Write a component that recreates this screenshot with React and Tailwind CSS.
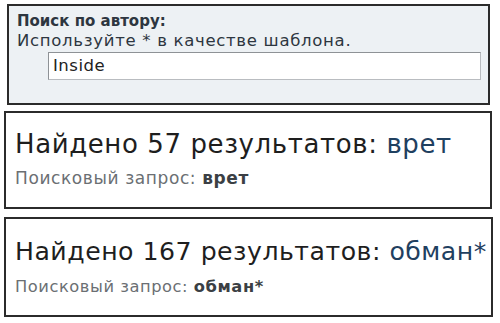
const RESULTS = [
  {
    count: 57, query: 'врет', mt: 'mt-[6px]', w: 'w-[488px]', h: 'h-[98px]', pt: 'pt-[16px]',
    title: 'text-[26px] tracking-[0.6px]', sub: 'mt-[8px] text-[17px] tracking-[0.6px]',
  },
  {
    count: 167, query: 'обман*', mt: 'mt-[8px]', w: 'w-[489px]', h: 'h-[100px]', pt: 'pt-[18px]',
    title: 'text-[25.2px] tracking-[0.5px]', sub: 'mt-[9px] text-[16.3px] tracking-[0.55px]',
  },
];

export default function App() {
  return (
    <div className="w-[500px] h-[323px] bg-white overflow-hidden" style={{ fontFamily: '"DejaVu Sans", Verdana, sans-serif' }}>
      <div className="ml-[7px] mt-[4px] w-[483px] h-[101px] border-2 border-[#2b2b2b] bg-[#edf1f4] pl-[8px] pt-[5px]">
        <div className="text-[15px] leading-[20px] font-bold text-[#2d3640]">Поиск по автору:</div>
        <div className="text-[16.5px] leading-[20px] tracking-[0.7px] text-[#2d3640]">Используйте * в качестве шаблона.</div>
        <div className="ml-[31px] mt-[1px] w-[433px] h-[28px] bg-white border border-[#b9bcc0] border-t-[#8e9296] border-l-[#8e9296] flex items-center pl-[4px] text-[16.5px] tracking-[0.5px] text-[#222]">
          Inside
        </div>
      </div>

      {RESULTS.map(r => (
        <div key={r.count} className={`${r.mt} ml-[4px] ${r.w} ${r.h} border-2 border-[#2b2b2b] bg-white pl-[9px] ${r.pt}`}>
          <div className={`${r.title} leading-[30px] text-[#1e1e1e] whitespace-nowrap`}>
            Найдено {r.count} результатов: <span className="text-[#1f4060]">{r.query}</span>
          </div>
          <div className={`${r.sub} leading-[22px] text-[#6b6f73] whitespace-nowrap`}>
            Поисковый запрос: <span className="font-bold text-[#3b3f44]">{r.query}</span>
          </div>
        </div>
      ))}
    </div>
  );
}
